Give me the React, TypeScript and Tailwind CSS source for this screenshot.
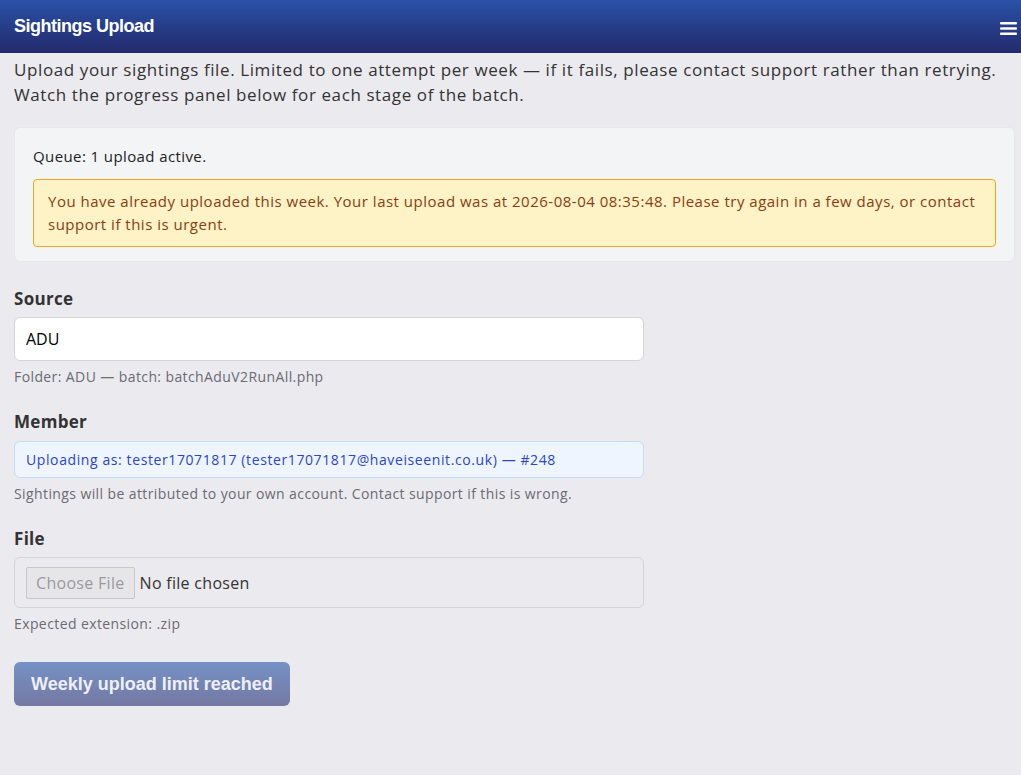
import React from "react";

const body = { fontFamily: '"Open Sans", "Liberation Sans", Arial, sans-serif' };
const heading = { fontFamily: '"Liberation Sans", Arial, sans-serif' };

const Header: React.FC = () => (
    <header className="h-[53px] flex items-center justify-between px-[14px] bg-gradient-to-b from-[#2852a8] to-[#232a6c]">
        <h1 className="text-white font-bold text-[18px] tracking-[-0.5px]" style={heading}>
            Sightings Upload
        </h1>
        <svg width="17" height="15" viewBox="0 0 17 15" className="mr-[-10px] mt-[4px]">
            <rect x="0" y="1" width="17" height="2.4" rx="1" fill="white" />
            <rect x="0" y="6.3" width="17" height="2.4" rx="1" fill="white" />
            <rect x="0" y="11.6" width="17" height="2.4" rx="1" fill="white" />
        </svg>
    </header>
);

const Label: React.FC<{ children: React.ReactNode }> = ({ children }) => (
    <label className="block text-[17px] font-bold text-[#333] mb-[6px] tracking-[0.3px]">{children}</label>
);

const Help: React.FC<{ children: React.ReactNode }> = ({ children }) => (
    <p className="text-[14px] text-[#6b6b73] mt-[5px] tracking-[0.4px]">{children}</p>
);

export default function App() {
    return (
        <div className="min-h-[775px] bg-[#ebeaef] text-[#333]" style={body}>
            <Header />
            <main className="px-[14px] pr-[6px]">
                <p className="text-[17px] leading-[25px] mt-[4px] text-[#333] tracking-[0.6px]">
                    Upload your sightings file. Limited to one attempt per week — if it fails, please
                    contact support rather than retrying. Watch the progress panel below for each stage
                    of the batch.
                </p>

                <section className="mt-[20px] bg-[#f3f4f6] border border-[#e5e7eb] rounded-[6px] px-[18px] pt-[17px] pb-[14px]">
                    <p className="text-[15px] text-[#222] tracking-[0.4px]">Queue: 1 upload active.</p>
                    <div className="mt-[11px] bg-[#fef3c6] border border-[#f0a520] rounded-[4px] px-[14px] py-[10px] text-[15px] leading-[23px] text-[#8a3d12] tracking-[0.5px]">
                        You have already uploaded this week. Your last upload was at 2026-08-04 08:35:48.
                        Please try again in a few days, or contact support if this is urgent.
                    </div>
                </section>

                <div className="w-[630px]">
                    <div className="mt-[24px]">
                        <Label>Source</Label>
                        <div className="h-[44px] bg-white border border-[#d4d4da] rounded-[6px] px-[11px] flex items-center text-[16px] text-black">
                            ADU
                        </div>
                        <Help>Folder: ADU — batch: batchAduV2RunAll.php</Help>
                    </div>

                    <div className="mt-[22px]">
                        <Label>Member</Label>
                        <div className="h-[37px] bg-[#eef5ff] border border-[#c5dcf8] rounded-[6px] px-[11px] flex items-center text-[14px] text-[#2b45c8] tracking-[0.6px]">
                            Uploading as: tester17071817 (tester17071817@haveiseenit.co.uk) — #248
                        </div>
                        <Help>Sightings will be attributed to your own account. Contact support if this is wrong.</Help>
                    </div>

                    <div className="mt-[22px]">
                        <Label>File</Label>
                        <div className="h-[51px] border border-[#d4d4da] rounded-[6px] px-[11px] flex items-center text-[16px] text-[#333] tracking-[0.3px]">
                            <span className="h-[32px] px-[9px] flex items-center bg-[#e6e6e8] border border-[#c8c8cc] rounded-[2px] text-[#9a9a9e]">
                                Choose File
                            </span>
                            <span className="ml-[5px]">No file chosen</span>
                        </div>
                        <Help>Expected extension: .zip</Help>
                    </div>

                    <button
                        disabled
                        className="mt-[28px] h-[44px] px-[17px] rounded-[6px] bg-gradient-to-b from-[#7592c6] to-[#7478a2] text-[#eef0f8] font-bold text-[18px]"
                        style={heading}
                    >
                        Weekly upload limit reached
                    </button>
                </div>
            </main>
        </div>
    );
}
